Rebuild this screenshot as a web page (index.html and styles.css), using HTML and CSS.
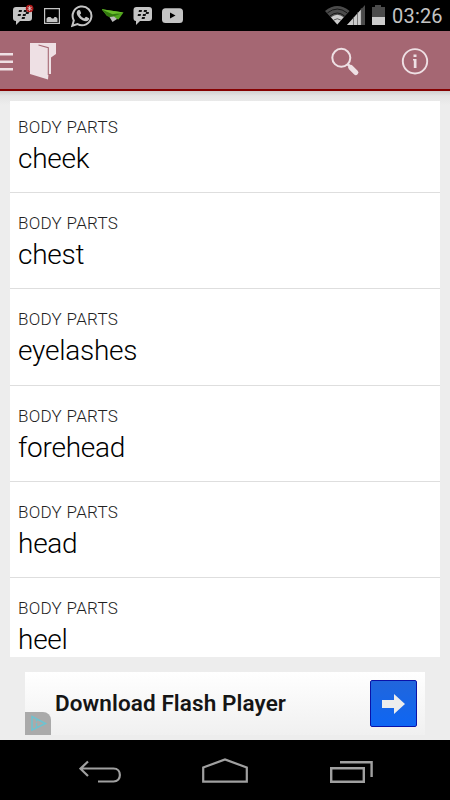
FILE: index.html
```html
<!DOCTYPE html>
<html lang="en">
    <head>
        <meta charset="UTF-8" />
        <meta name="viewport" content="width=device-width, initial-scale=1.0" />
        <title>Body parts</title>
        <link rel="stylesheet" href="styles.css">
    </head>
    <body>
        <div class="status">
            <div class="notifications">
                <!-- chat with badge -->
                <svg width="22" height="31" viewBox="12 0 22 31">
                    <path d="M16 7h13q3 0 3 3v8q0 3-3 3h-9l-4 4v-4q-3 0-3-3v-8q0-3 3-3z" fill="#c4c4c4" />
                    <path d="M19 10h3l-.4 2h-3zM24 10h3l-.4 2h-3zM18 14h3l-.4 2h-3zM23 14h3l-.4 2h-3zM26 12h3l-.4 2h-3zM22 17h3l-.4 2h-3z" fill="#111" />
                    <circle cx="29.6" cy="8.5" r="3.8" fill="#ad1717" />
                    <path d="M29.6 6v5M27.5 7.2l4.2 2.6M31.7 7.2l-4.2 2.6" stroke="#ddd" stroke-width=".8" />
                </svg>
                <!-- picture -->
                <svg class="picture" width="16" height="31" viewBox="44 0 16 31">
                    <path d="M44.6 8.6h14.8v14.8H44.6z" fill="none" stroke="#c4c4c4" stroke-width="1.2" />
                    <path d="M46.500 22v-3.500l1.500-1.500h2.500l1.500 1.500h1.500l1-1.500h1.500l1.500 1.500V22z" fill="#c4c4c4" />
                </svg>
                <!-- phone bubble -->
                <svg class="whatsapp" width="22" height="31" viewBox="72 0 22 31">
                    <path d="M73.300 25.700l1.500-5.300a9.400 9.400 0 1 1 3.700 3.700z" fill="none" stroke="#c4c4c4" stroke-width="2" />
                    <path d="M79 10.300q1-.8 2 0l1.100 2.600q.1.700-1.200 1.900 1.500 2.700 4.300 3.700l1.400-1.500q.5-.4 1.100 0l2.400 1.200c.4 1.500-1.200 3-3.100 3.100-4 0-9.200-4.800-9.300-8.200 0-1.200.5-2.200 1.300-2.800z" fill="#c4c4c4" />
                </svg>
                <!-- paper plane -->
                <svg width="22" height="31" viewBox="102 0 22 31">
                    <path d="M101.500 9.200l22 3.300-5 7-3.500-1-8-2.500z" fill="#51a51d" />
                    <path d="M101.500 9.200l18.500 4.800-9.500 3.500-3.500-2z" fill="#337a10" />
                    <path d="M101.500 9.200l22 3.300-11 1.800z" fill="#68bd2b" />
                    <path d="M109.500 17l4.500-.5 3 2.500-4.500 3z" fill="#bbb" />
                </svg>
                <!-- chat -->
                <svg width="20" height="31" viewBox="133 0 20 31">
                    <path d="M136.500 7h12.500q3 0 3 3v8q0 3-3 3h-9l-4 4v-4q-2.500 0-2.500-3v-8q0-3 3-3z" fill="#c4c4c4" />
                    <path d="M139 10h3l-.4 2h-3zM144 10h3l-.4 2h-3zM138 14h3l-.4 2h-3zM143 14h3l-.4 2h-3zM146 12h3l-.4 2h-3zM142 17h3l-.4 2h-3z" fill="#111" />
                </svg>
                <!-- video -->
                <svg width="21" height="31" viewBox="162 0 21 31">
                    <rect x="162" y="8.300" width="21" height="14.700" rx="3.500" fill="#c4c4c4" />
                    <path d="M170 12.500v6l5.500-3z" fill="#000" />
                </svg>
            </div>
            <div class="system">
                <svg width="61" height="31" viewBox="325 0 61 31">
                    <path d="M325 11q12.300-10 24.600 0L337.300 24.500z" fill="#4b4b4b" />
                    <path d="M327.500 12.800q9.800-7.500 19.600 0M330 16q7.300-6 14.600 0" fill="none" stroke="#000" stroke-width=".7" />
                    <path d="M331 17.300q6.300-5 12.600 0l-6.300 7.200z" fill="#ccc" />
                    <path d="M333.800 20q3.500-2.500 7 0" fill="none" stroke="#111" stroke-width=".6" />
                    <path d="M347 25l18-20v20z" fill="#4b4b4b" />
                    <path d="M347 25l14-15.500V25z" fill="#ccc" />
                    <path d="M353.500 17v8M357.500 12v13M361.300 8v17" stroke="#555" stroke-width=".7" />
                    <path d="M372 7h3V5h6v2h4v18h-13z" fill="#4b4b4b" />
                    <path d="M372 17h13v8h-13z" fill="#ccc" />
                </svg>
                <span class="clock">03:26</span>
            </div>
        </div>

        <div class="header">
            <div class="brand">
                <svg width="60" height="58" viewBox="0 31 60 58">
                    <path d="M0 54.300h13M0 61.800h13M0 69.300h13" stroke="#eee0e4" stroke-width="2.600" />
                    <path d="M30 43h26v11l-5 3.500V74h-2.500l-.5 5.500L30 74z" fill="#eee0e4" />
                    <path d="M38.500 45l9.800 2.700V75" fill="none" stroke="#a56773" stroke-width="1.100" />
                </svg>
            </div>
            <div class="actions">
                <svg width="30" height="58" viewBox="330 31 30 58">
                    <circle cx="341.300" cy="57.800" r="9" fill="none" stroke="#eee0e4" stroke-width="2" />
                    <path d="M347.500 64l3 3" stroke="#eee0e4" stroke-width="2.500" />
                    <path d="M350.800 67.500l5 5" stroke="#eee0e4" stroke-width="5.200" stroke-linecap="round" />
                </svg>
                <svg width="28" height="58" viewBox="401 31 28 58">
                    <circle cx="415" cy="61.300" r="12.200" fill="none" stroke="#eee0e4" stroke-width="1.900" />
                    <path d="M413.500 54.500h3v2.500h-3zM413 59h3.500v9h-2.700v-7.500H413z" fill="#eee0e4" />
                </svg>
            </div>
        </div>

        <div class="content">
            <div class="list">
                <div class="item">
                    <span class="category">BODY PARTS</span>
                    <span class="word">cheek</span>
                </div>
                <div class="item">
                    <span class="category">BODY PARTS</span>
                    <span class="word">chest</span>
                </div>
                <div class="item">
                    <span class="category">BODY PARTS</span>
                    <span class="word">eyelashes</span>
                </div>
                <div class="item">
                    <span class="category">BODY PARTS</span>
                    <span class="word">forehead</span>
                </div>
                <div class="item">
                    <span class="category">BODY PARTS</span>
                    <span class="word">head</span>
                </div>
                <div class="item">
                    <span class="category">BODY PARTS</span>
                    <span class="word">heel</span>
                </div>
            </div>

            <div class="ad">
                <span class="ad-title">Download Flash Player</span>
                <div class="ad-button">
                    <svg width="24" height="20" viewBox="0 0 24 20">
                        <path d="M0 6h12V0l11 10-11 10v-6H0z" fill="#ededed" />
                    </svg>
                </div>
                <div class="ad-mark">
                    <svg width="26" height="23" viewBox="0 0 26 23">
                        <path d="M7 4.500v13.500l13.500-6.500z" fill="none" stroke="#6cc3d1" stroke-width="1.500" />
                        <path d="M11.500 8v1.500M11.500 11v4" stroke="#6cc3d1" stroke-width="1.300" />
                    </svg>
                </div>
            </div>
        </div>

        <div class="navbar">
            <svg width="42" height="24" viewBox="79 760 42 24">
                <path d="M88 761.500l-7.500 7.200 7.500 7.300M81 768.500h32.500c8.500 0 8.500 13 0 13H98" fill="none" stroke="#a0a0a0" stroke-width="2.200" />
            </svg>
            <svg width="47" height="26" viewBox="202 758 47 26">
                <path d="M203.200 781.700V767.500l21.800-8 21.800 8v14.200z" fill="none" stroke="#a0a0a0" stroke-width="2.200" />
            </svg>
            <svg width="43" height="24" viewBox="330 760 43 24">
                <path d="M331.200 768.200h32.600v13.500h-32.600zM340 762.200h31.600V777" fill="none" stroke="#a0a0a0" stroke-width="2.400" />
            </svg>
        </div>
    </body>
</html>
```
FILE: styles.css
```css
* {
    box-sizing: border-box;
}

body {
    margin: 0;
    width: 450px;
    height: 800px;
    overflow: hidden;
    display: flex;
    flex-direction: column;
    background-color: #ededed;
    font-family: Roboto, "Liberation Sans", sans-serif;
}

svg {
    display: block;
    flex: none;
}

.status {
    height: 31px;
    flex: none;
    display: flex;
    justify-content: space-between;
    background-color: #000;
}

.notifications {
    display: flex;
    gap: 9px;
    padding-left: 12px;
}

.picture {
    margin-left: 1px;
}

.whatsapp {
    margin-left: 2px;
}

.system {
    display: flex;
    gap: 6px;
    padding-right: 7px;
}

.clock {
    width: 51px;
    color: #c4c4c4;
    font-size: 20px;
    line-height: 33px;
    letter-spacing: 0.2px;
    white-space: nowrap;
}

.header {
    height: 60px;
    flex: none;
    display: flex;
    justify-content: space-between;
    background-color: #a56773;
    border-bottom: 2px solid #850000;
}

.actions {
    display: flex;
    gap: 41px;
    padding-right: 21px;
}

.content {
    height: 649px;
    flex: none;
    padding: 10px 10px 0;
    background: linear-gradient(#cfcfcf, #e4e4e4 5px, #ededed 14px);
}

.list {
    height: 556px;
    overflow: hidden;
    background-color: #fff;
}

.item {
    height: 96.1px;
    padding: 20px 8px 0;
    display: flex;
    flex-direction: column;
    border-bottom: 1px solid #dedede;
    color: #000;
    font-weight: 300;
}

.item:first-child {
    height: 92.4px;
    padding-top: 16px;
}

.category {
    color: #222;
    font-size: 17px;
    line-height: 20px;
    letter-spacing: 0.3px;
}

.word {
    font-size: 28px;
    line-height: 43px;
    letter-spacing: -0.25px;
}

.ad {
    position: relative;
    width: 400px;
    height: 63px;
    margin: 15px 15px 0;
    padding: 0 8px 0 30px;
    display: flex;
    align-items: center;
    justify-content: space-between;
    background: linear-gradient(#fff, #f0f0f0);
}

.ad-title {
    padding-bottom: 2px;
    color: #151515;
    font-size: 22.5px;
    font-weight: 600;
    letter-spacing: 0.1px;
}

.ad-button {
    width: 47px;
    height: 47px;
    display: flex;
    align-items: center;
    justify-content: center;
    background: linear-gradient(#2166dc, #0e66f3);
    border: 1px solid #0a12a8;
    border-radius: 2px;
}

.ad-mark {
    position: absolute;
    left: 0;
    bottom: 0;
    width: 26px;
    height: 23px;
    background-color: #aaa;
    border-top-right-radius: 8px;
}

.navbar {
    height: 60px;
    flex: none;
    display: flex;
    align-items: flex-end;
    justify-content: space-between;
    padding: 0 77px 16px 79px;
    background-color: #000;
}
```
